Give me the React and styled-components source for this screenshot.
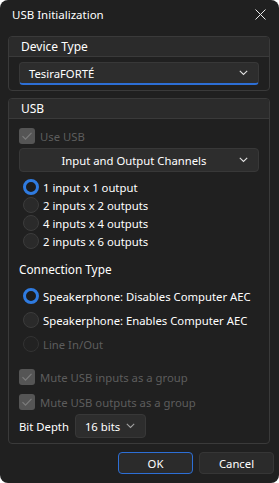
import React from "react";
import styled, { createGlobalStyle } from "styled-components";

const Global = createGlobalStyle`
  html, body { margin: 0; padding: 0; background: #ffffff; }
  * { box-sizing: border-box; }
`;

const Window = styled.div`
  width: 279px;
  height: 483px;
  background: #202020;
  border-radius: 8px;
  overflow: hidden;
  display: flex;
  flex-direction: column;
  font-family: "Noto Sans", "Open Sans", sans-serif;
  font-size: 11.3px;
  color: #ffffff;
`;

const TitleBar = styled.div`
  height: 30px;
  display: flex;
  align-items: center;
  justify-content: space-between;
  padding: 0 13px 2px 12px;
  font-size: 11.5px;
`;

const Content = styled.div`
  padding: 6px 9px 0 8px;
  display: flex;
  flex-direction: column;
  gap: 7px;
`;

const Group = styled.div`
  border: 1px solid #3a3a3a;
  border-radius: 4px;
  overflow: hidden;
`;

const GroupHeader = styled.div`
  height: 20px;
  display: flex;
  align-items: center;
  padding-left: 12px;
  background: #2b2b2b;
  border-bottom: 1px solid #3a3a3a;
  font-size: 12px;
`;

const GroupBody = styled.div`
  padding: ${(p) => p.$pad};
  display: flex;
  flex-direction: column;
`;

const Select = styled.div`
  height: ${(p) => p.$h || 24}px;
  width: ${(p) => (p.$w ? p.$w + "px" : "auto")};
  flex: ${(p) => (p.$grow ? 1 : "none")};
  background: #2d2d2d;
  border: 1px solid #383838;
  border-bottom: ${(p) => (p.$focus ? "2px solid #2d6fd6" : "1px solid #383838")};
  border-radius: 4px;
  display: flex;
  align-items: center;
  padding: 0 10px 0 ${(p) => p.$pl || 9}px;
  color: #ffffff;
  font-size: 11.3px;
`;

const SelectText = styled.span`
  flex: 1;
  text-align: ${(p) => (p.$center ? "center" : "left")};
`;

const Row = styled.div`
  display: flex;
  align-items: center;
  height: ${(p) => p.$h}px;
  margin-top: ${(p) => p.$mt || 0}px;
  gap: ${(p) => p.$gap || 4}px;
  padding-left: ${(p) => p.$pl || 0}px;
  color: ${(p) => (p.$disabled ? "#5d5d5d" : "#ffffff")};
`;

const RadioCircle = styled.span`
  width: 16px;
  height: 16px;
  border-radius: 50%;
  flex: none;
  background: ${(p) => (p.$checked ? "#1c1c1c" : p.$disabled ? "#222" : "#2a2a2a")};
  border: ${(p) =>
    p.$checked ? "3.5px solid #2f7be0" : p.$disabled ? "1px solid #333" : "1px solid #3c3c3c"};
`;

const CheckBox = styled.span`
  width: 16px;
  height: 16px;
  border-radius: 3px;
  flex: none;
  background: #555555;
  display: flex;
  align-items: center;
  justify-content: center;
`;

const Label = styled.div`
  height: 16px;
  display: flex;
  align-items: center;
  margin-top: ${(p) => p.$mt}px;
  font-size: 11.8px;
`;

const Footer = styled.div`
  display: flex;
  justify-content: flex-end;
  gap: 6px;
  padding: 8px 5px 0 0;
`;

const Button = styled.button`
  width: 75px;
  height: 22px;
  border-radius: 4px;
  background: #2b2b2b;
  border: ${(p) => (p.$primary ? "1.5px solid #2d6fd6" : "1px solid #363636")};
  color: #ffffff;
  font-family: "Noto Sans", "Open Sans", sans-serif;
  font-size: 11.3px;
  padding: 0;
`;

const Chevron = ({ color = "#e0e0e0" }) => (
  <svg width="9" height="6" viewBox="0 0 9 6">
    <polyline points="0.8,0.8 4.5,4.5 8.2,0.8" fill="none" stroke={color} strokeWidth="1.1" />
  </svg>
);

const Check = () => (
  <svg width="12" height="10" viewBox="0 0 12 10">
    <polyline points="1.5,5.2 4.5,8.2 10.5,1.8" fill="none" stroke="#7c7c7c" strokeWidth="1.2" />
  </svg>
);

const Close = () => (
  <svg width="11" height="11" viewBox="0 0 11 11">
    <path d="M0.5 0.5 L10.5 10.5 M10.5 0.5 L0.5 10.5" stroke="#e8e8e8" strokeWidth="1" />
  </svg>
);

const Radio = ({ label, checked, disabled, h, mt }) => (
  <Row $h={h} $mt={mt} $pl={4} $disabled={disabled}>
    <RadioCircle $checked={checked} $disabled={disabled} />
    <span>{label}</span>
  </Row>
);

const CheckRow = ({ label, h, mt }) => (
  <Row $h={h} $mt={mt} $gap={5} $disabled>
    <CheckBox>
      <Check />
    </CheckBox>
    <span>{label}</span>
  </Row>
);

export default function App() {
  return (
    <>
      <Global />
      <Window>
        <TitleBar>
          <span>USB Initialization</span>
          <Close />
        </TitleBar>
        <Content>
          <Group>
            <GroupHeader>Device Type</GroupHeader>
            <GroupBody $pad="5px 10px 5px 10px">
              <Select $h={23} $focus>
                <SelectText>TesiraFORTÉ</SelectText>
                <Chevron />
              </Select>
            </GroupBody>
          </Group>
          <Group>
            <GroupHeader>USB</GroupHeader>
            <GroupBody $pad="9px 10px 5px 10px">
              <CheckRow label="Use USB" h={16} />
              <Row $h={24} $mt={4}>
                <Select $h={24} $grow>
                  <SelectText $center>Input and Output Channels</SelectText>
                  <Chevron />
                </Select>
              </Row>
              <Radio label="1 input x 1 output" checked h={18} mt={6} />
              <Radio label="2 inputs x 2 outputs" h={18} />
              <Radio label="4 inputs x 4 outputs" h={18} />
              <Radio label="2 inputs x 6 outputs" h={18} />
              <Label $mt={11}>Connection Type</Label>
              <Radio label="Speakerphone: Disables Computer AEC" checked h={24} mt={7} />
              <Radio label="Speakerphone: Enables Computer AEC" h={24} />
              <Radio label="Line In/Out" disabled h={24} />
              <CheckRow label="Mute USB inputs as a group" h={24} mt={9} />
              <CheckRow label="Mute USB outputs as a group" h={24} mt={1} />
              <Row $h={24} $mt={0} $gap={6}>
                <span>Bit Depth</span>
                <Select $h={24} $w={71} $pl={9}>
                  <SelectText>16 bits</SelectText>
                  <Chevron color="#a0a0a0" />
                </Select>
              </Row>
            </GroupBody>
          </Group>
        </Content>
        <Footer>
          <Button $primary>OK</Button>
          <Button>Cancel</Button>
        </Footer>
      </Window>
    </>
  );
}
